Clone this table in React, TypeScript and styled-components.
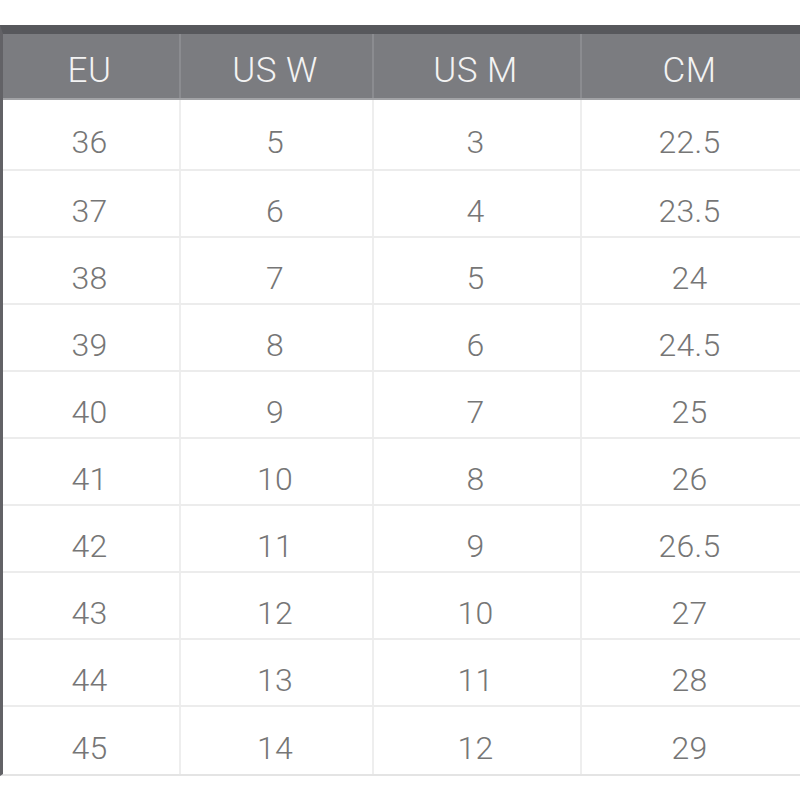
import React from "react";
import styled, { createGlobalStyle } from "styled-components";

const GlobalStyle = createGlobalStyle`
  html, body {
    margin: 0;
    padding: 0;
    background: #ffffff;
  }
  body {
    font-family: "Roboto", "Liberation Sans", Arial, sans-serif;
  }
`;

const Page = styled.div`
  width: 800px;
  height: 800px;
  overflow: hidden;
  background: #ffffff;
  padding-top: 25px;
  box-sizing: border-box;
`;

const Table = styled.div`
  width: 800px;
  border-top: 9px solid #57585c;
  border-left: 3px solid #626266;
  border-bottom: 2px solid #e4e4e4;
  box-sizing: border-box;
`;

const Grid = styled.div<{ $h: number; $header?: boolean }>`
  display: grid;
  grid-template-columns: 178px 193px 208px 1fr;
  height: ${(p) => p.$h}px;
  box-sizing: border-box;
  background: ${(p) => (p.$header ? "#7b7c80" : "#ffffff")};
  border-bottom: 2px solid ${(p) => (p.$header ? "#a2a3a6" : "#ececec")};
  &:last-child {
    border-bottom: none;
  }
`;

const HeadCell = styled.div`
  display: flex;
  align-items: center;
  justify-content: center;
  padding-top: 8px;
  padding-right: 3px;
  box-sizing: border-box;
  color: #f3f3f3;
  font-size: 35px;
  font-weight: 300;
  letter-spacing: 0.5px;
  border-right: 2px solid #8b8c90;
  &:last-child {
    border-right: none;
  }
`;

const Cell = styled.div`
  display: flex;
  align-items: center;
  justify-content: center;
  padding-top: 15px;
  padding-right: 3px;
  box-sizing: border-box;
  color: #767676;
  font-size: 32px;
  font-weight: 300;
  letter-spacing: 0.3px;
  border-right: 2px solid #eeeeee;
  &:last-child {
    border-right: none;
  }
`;

const headers = ["EU", "US W", "US M", "CM"];
const rows: string[][] = [
  ["36", "5", "3", "22.5"],
  ["37", "6", "4", "23.5"],
  ["38", "7", "5", "24"],
  ["39", "8", "6", "24.5"],
  ["40", "9", "7", "25"],
  ["41", "10", "8", "26"],
  ["42", "11", "9", "26.5"],
  ["43", "12", "10", "27"],
  ["44", "13", "11", "28"],
  ["45", "14", "12", "29"],
];

export default function App() {
  return (
    <>
      <GlobalStyle />
      <Page>
        <Table>
          <Grid $h={66} $header>
            {headers.map((h) => (
              <HeadCell key={h}>{h}</HeadCell>
            ))}
          </Grid>
          {rows.map((r, i) => (
            <Grid key={r[0]} $h={i === 0 ? 71 : 67}>
              {r.map((c, j) => (
                <Cell key={j}>{c}</Cell>
              ))}
            </Grid>
          ))}
        </Table>
      </Page>
    </>
  );
}
